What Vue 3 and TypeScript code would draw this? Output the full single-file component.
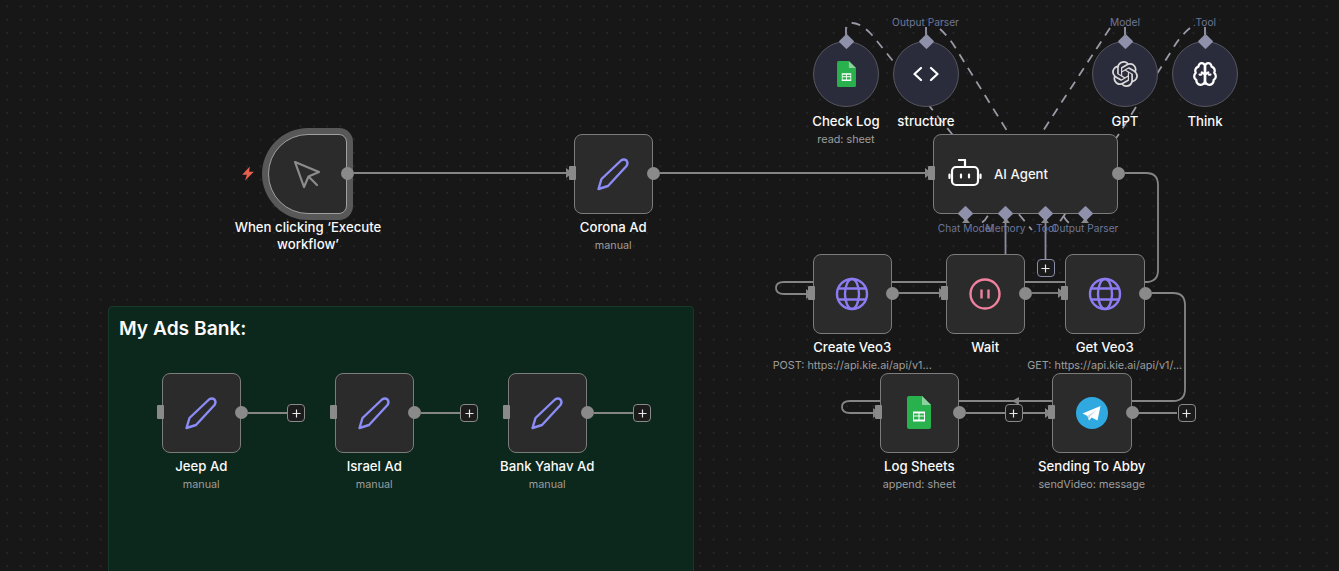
<script setup lang="ts">
interface FlowNode { name: string; sub?: string; x: number; y: number; icon: string }
interface Port { label: string; x: number }

const nodes: FlowNode[] = [
  { name: 'Corona Ad', sub: 'manual', x: 573.5, y: 134, icon: 'pen' },
  { name: 'Create Veo3', sub: 'POST: https://api.kie.ai/api/v1...', x: 812.5, y: 254, icon: 'globe' },
  { name: 'Wait', x: 945.5, y: 254, icon: 'pause' },
  { name: 'Get Veo3', sub: 'GET: https://api.kie.ai/api/v1/...', x: 1065, y: 254, icon: 'globe' },
  { name: 'Log Sheets', sub: 'append: sheet', x: 879.5, y: 373, icon: 'sheet' },
  { name: 'Sending To Abby', sub: 'sendVideo: message', x: 1052, y: 373, icon: 'telegram' },
  { name: 'Jeep Ad', sub: 'manual', x: 161.5, y: 373, icon: 'pen' },
  { name: 'Israel Ad', sub: 'manual', x: 334.5, y: 373, icon: 'pen' },
  { name: 'Bank Yahav Ad', sub: 'manual', x: 507.5, y: 373, icon: 'pen' },
]

const tools: FlowNode[] = [
  { name: 'Check Log', sub: 'read: sheet', x: 813, y: 41, icon: 'sheet' },
  { name: 'structure', x: 893, y: 41, icon: 'code' },
  { name: 'GPT', x: 1092, y: 41, icon: 'openai' },
  { name: 'Think', x: 1172, y: 41, icon: 'brain' },
]

const topPorts: Port[] = [
  { label: 'Output Parser', x: 925.5 },
  { label: 'Model', x: 1125 },
  { label: '.Tool', x: 1204.5 },
]
const bottomPorts: Port[] = [
  { label: 'Chat Model', x: 965.5 },
  { label: 'Memory', x: 1005.5 },
  { label: '.Tool', x: 1045 },
  { label: 'Output Parser', x: 1085 },
]
const diamonds = [846, 926, 1125, 1205]
const pluses = [
  { x: 296, y: 413, tint: false },
  { x: 469, y: 413, tint: false },
  { x: 642, y: 413, tint: false },
  { x: 1045.5, y: 268, tint: true },
  { x: 1013.5, y: 413, tint: false },
  { x: 1186.5, y: 413, tint: false },
]
const solid = [
  'M354 173H568',
  'M660 173H925',
  'M1125 173H1146Q1158 173 1158 185V270Q1158 282 1146 282H784Q776 282 776 288Q776 294 784 294H808',
  'M899 293H941',
  'M1032 293H1060',
  'M1152 293H1173Q1185 293 1185 305V389Q1185 401 1173 401H850Q842 401 842 407Q842 413 850 413H875',
  'M966 413H1047',
  'M1138 413H1177',
  'M248 413H287',
  'M421 413H460',
  'M594 413H633',
]
const portLines = ['M1005.5 220V254', 'M1045.5 220V259']
const dashed = [
  'M846 36V30Q847 22 853 23Q862 24 872 35L952 134L1032 230',
  'M940 29Q950 38 958 52L1009 134L1066 220L1072 226',
  'M1110 28L1041 134L985 220L978 226',
  'M1190 28Q1180 36 1172 50L1119 134L1061 220L1056 226',
]
const arrows = [
  [568, 173], [927, 173], [808, 294], [941, 293], [1060, 293], [875, 413], [1047, 413],
]
</script>

<template>
  <main class="canvas">
    <section class="group">
      <h2 class="group-title">My Ads Bank:</h2>
    </section>

    <svg class="edges" width="1339" height="571" viewBox="0 0 1339 571">
      <path v-for="d in solid" :key="d" :d="d" class="edge" />
      <path v-for="d in portLines" :key="d" :d="d" class="edge port-line" />
      <path v-for="d in dashed" :key="d" :d="d" class="edge dash" />
      <path v-for="a in arrows" :key="a.join()" :d="`M${a[0] - 2} ${a[1] - 5}L${a[0] + 5} ${a[1]}L${a[0] - 2} ${a[1] + 5}Z`" class="head" />
      <path d="M1012 401L1019 397V405Z" class="head" />
    </svg>

    <!-- Trigger -->
    <div class="bolt">
      <svg width="14" height="15" viewBox="0 0 24 24"><path d="M15 0L2 14h8L7 24L22 9h-8z" fill="#e8604f" /></svg>
    </div>
    <article class="node trigger">
      <svg width="30" height="30" viewBox="0 0 30 30" fill="none" stroke="#8c8c8c" stroke-width="2.200" stroke-linejoin="round" stroke-linecap="round">
        <path d="M3 3L27 13L16.500 17.500L12 28Z M17 18L25 26" />
      </svg>
      <span class="port-out" />
    </article>
    <div class="label trigger-label"><strong>When clicking ‘Execute workflow’</strong></div>

    <!-- Agent -->
    <article class="node agent">
      <svg width="34" height="30" viewBox="0 0 34 30" fill="none" stroke="#fff" stroke-width="2.200" stroke-linecap="round" stroke-linejoin="round">
        <path d="M11 1H17V8" />
        <rect x="4" y="8" width="26" height="18" rx="4" />
        <path d="M1.500 15.500V19M32.500 15.500V19" />
        <path d="M13 15.500V18.500M21 15.500V18.500" />
      </svg>
      <span class="agent-title">AI Agent</span>
      <span class="port-out" />
      <span class="port-in" />
    </article>

    <!-- Regular nodes -->
    <template v-for="n in nodes" :key="n.name">
      <article class="node" :style="{ left: n.x + 'px', top: n.y + 'px' }">
        <svg v-if="n.icon === 'pen'" width="34" height="34" viewBox="0 0 34 34" fill="none" stroke="#8b8cf6" stroke-width="2.400" stroke-linejoin="round">
          <path d="M2.500 32L5.500 22L25 3.500Q28 1.500 30.500 3.500Q32.500 6 30.500 9L12 29Z" />
        </svg>
        <svg v-else-if="n.icon === 'globe'" width="34" height="34" viewBox="0 0 34 34" fill="none" stroke="#8c7cf2" stroke-width="2.400">
          <circle cx="17" cy="17" r="15" />
          <ellipse cx="17" cy="17" rx="7" ry="15" />
          <path d="M3 11.500H31M3 22.500H31" />
        </svg>
        <svg v-else-if="n.icon === 'pause'" width="32" height="32" viewBox="0 0 32 32" fill="none" stroke="#f0829f" stroke-width="2.400">
          <circle cx="16" cy="16" r="14.500" />
          <path d="M12.500 11.500V20.500M19.500 11.500V20.500" />
        </svg>
        <svg v-else-if="n.icon === 'sheet'" width="24" height="33" viewBox="0 0 24 33">
          <path d="M2 0H15L24 9V31Q24 33 22 33H2Q0 33 0 31V2Q0 0 2 0Z" fill="#28b14c" />
          <path d="M15 0L24 9H15Z" fill="#8ed1a0" />
          <path d="M6 15.500H18V25.500H6Z M7 17.500V19.500H11.500V17.500Z M12.500 17.500V19.500H17V17.500Z M7 20.500V23.500H11.500V20.500Z M12.500 20.500V23.500H17V20.500Z" fill="#fff" fill-rule="evenodd" />
        </svg>
        <svg v-else-if="n.icon === 'telegram'" width="32" height="32" viewBox="0 0 32 32">
          <circle cx="16" cy="16" r="16" fill="#2fa9e0" />
          <path d="M6.500 16.500L24.500 9L21.500 23.500L15.700 20.500L13 23.500L11.500 19Z" fill="#fff" />
          <path d="M11.500 19L21 12.500L14 19.500L13 23.500Z" fill="#c4d8e8" />
        </svg>
        <span class="port-out" />
        <span class="port-in" />
      </article>
      <div class="label" :style="{ left: n.x - 50.25 + 'px', top: n.y + 84 + 'px' }">
        <strong>{{ n.name }}</strong>
        <small v-if="n.sub">{{ n.sub }}</small>
      </div>
    </template>

    <!-- AI sub-nodes -->
    <template v-for="t in tools" :key="t.name">
      <article class="tool" :style="{ left: t.x + 'px', top: t.y + 'px' }">
        <svg v-if="t.icon === 'sheet'" width="19" height="26" viewBox="0 0 24 33">
          <path d="M2 0H15L24 9V31Q24 33 22 33H2Q0 33 0 31V2Q0 0 2 0Z" fill="#28b14c" />
          <path d="M15 0L24 9H15Z" fill="#8ed1a0" />
          <path d="M6 15.500H18V25.500H6Z M7 17.500V19.500H11.500V17.500Z M12.500 17.500V19.500H17V17.500Z M7 20.500V23.500H11.500V20.500Z M12.500 20.500V23.500H17V20.500Z" fill="#fff" fill-rule="evenodd" />
        </svg>
        <svg v-else-if="t.icon === 'code'" width="26" height="16" viewBox="0 0 26 16" fill="none" stroke="#fff" stroke-width="2.200" stroke-linecap="round" stroke-linejoin="round">
          <path d="M8 2L1.500 8L8 14M18 2L24.500 8L18 14" />
        </svg>
        <svg v-else-if="t.icon === 'openai'" width="26" height="26" viewBox="0 0 24 24" fill="#d9d9d9">
          <path d="M22.2819 9.8211a5.9847 5.9847 0 0 0-.5157-4.9108 6.0462 6.0462 0 0 0-6.5098-2.9A6.0651 6.0651 0 0 0 4.9807 4.1818a5.9847 5.9847 0 0 0-3.9977 2.9 6.0462 6.0462 0 0 0 .7427 7.0966 5.98 5.98 0 0 0 .511 4.9107 6.051 6.051 0 0 0 6.5146 2.9001A5.9847 5.9847 0 0 0 13.2599 24a6.0557 6.0557 0 0 0 5.7718-4.2058 5.9894 5.9894 0 0 0 3.9977-2.9001 6.0557 6.0557 0 0 0-.7475-7.0729zm-9.022 12.6081a4.4755 4.4755 0 0 1-2.8764-1.0408l.1419-.0804 4.7783-2.7582a.7948.7948 0 0 0 .3927-.6813v-6.7369l2.02 1.1686a.071.071 0 0 1 .038.052v5.5826a4.504 4.504 0 0 1-4.4945 4.4944zm-9.6607-4.1254a4.4708 4.4708 0 0 1-.5346-3.0137l.142.0852 4.783 2.7582a.7712.7712 0 0 0 .7806 0l5.8428-3.3685v2.3324a.0804.0804 0 0 1-.0332.0615L9.74 19.9502a4.4992 4.4992 0 0 1-6.1408-1.6464zM2.3408 7.8956a4.485 4.485 0 0 1 2.3655-1.9728V11.6a.7664.7664 0 0 0 .3879.6765l5.8144 3.3543-2.0201 1.1685a.0757.0757 0 0 1-.071 0l-4.8303-2.7865A4.504 4.504 0 0 1 2.3408 7.872zm16.5963 3.8558L13.1038 8.364 15.1192 7.2a.0757.0757 0 0 1 .071 0l4.8303 2.7913a4.4944 4.4944 0 0 1-.6765 8.1042v-5.6772a.79.79 0 0 0-.407-.667zm2.0107-3.0231l-.142-.0852-4.7735-2.7818a.7759.7759 0 0 0-.7854 0L9.409 9.2297V6.8974a.0662.0662 0 0 1 .0284-.0615l4.8303-2.7866a4.4992 4.4992 0 0 1 6.6802 4.66zM8.3065 12.863l-2.02-1.1638a.0804.0804 0 0 1-.038-.0567V6.0742a4.4992 4.4992 0 0 1 7.3757-3.4537l-.142.0805L8.704 5.459a.7948.7948 0 0 0-.3927.6813zm1.0976-2.3654l2.602-1.4998 2.6069 1.4998v2.9994l-2.5974 1.4997-2.6067-1.4997Z" />
        </svg>
        <svg v-else width="26" height="26" viewBox="0 0 24 24" fill="none" stroke="#fff" stroke-width="2.100" stroke-linecap="round" stroke-linejoin="round">
          <path d="M12 5a3 3 0 1 0-5.997.125 4 4 0 0 0-2.526 5.77 4 4 0 0 0 .556 6.588A4 4 0 1 0 12 18Z" />
          <path d="M12 5a3 3 0 1 1 5.997.125 4 4 0 0 1 2.526 5.77 4 4 0 0 1-.556 6.588A4 4 0 1 1 12 18Z" />
          <path d="M12 5V21M12 12.500L9 10.500M12 12.500L15 10.500M7 12.500H8.500M15.500 12.500H17" />
        </svg>
      </article>
      <div class="label" :style="{ left: t.x - 57 + 'px', top: t.y + 71 + 'px' }">
        <strong>{{ t.name }}</strong>
        <small v-if="t.sub">{{ t.sub }}</small>
      </div>
    </template>

    <!-- Ports -->
    <span v-for="x in diamonds" :key="'d' + x" class="diamond" :style="{ left: x - 5.5 + 'px', top: '35.5px' }" />
    <span v-for="x in diamonds" :key="'s' + x" class="stub" :style="{ left: x - 1 + 'px' }" />
    <span v-for="p in bottomPorts" :key="'t' + p.x" class="tip" :style="{ left: p.x - 4 + 'px' }" />
    <span v-for="p in bottomPorts" :key="'b' + p.x" class="diamond" :style="{ left: p.x - 5.5 + 'px', top: '207.5px' }" />
    <span v-for="p in topPorts" :key="'tl' + p.x" class="port-label" :style="{ left: p.x + 'px', top: '16px' }">{{ p.label }}</span>
    <span v-for="p in bottomPorts" :key="'bl' + p.x" class="port-label" :style="{ left: p.x + 'px', top: '222px' }">{{ p.label }}</span>

    <button
      v-for="p in pluses"
      :key="`${p.x}-${p.y}`"
      class="plus"
      :class="{ tint: p.tint }"
      :style="{ left: p.x - 9 + 'px', top: p.y - 9 + 'px' }"
      aria-label="Add node"
    >
      <svg width="9" height="9" viewBox="0 0 10 10" stroke="#e8e8e8" stroke-width="1.300"><path d="M5 .5V9.500M.5 5H9.500" /></svg>
    </button>
  </main>
</template>

<style>
html, body { margin: 0; background: #171717; overflow: hidden; }
</style>

<style scoped>
.canvas {
  position: relative;
  width: 1339px;
  height: 571px;
  overflow: hidden;
  background-color: #171717;
  background-image: radial-gradient(circle at center, #2c2c2c 0.6px, transparent 0.9px);
  background-size: 13.33px 13.33px;
  background-position: 0.6px -0.3px;
  font-family: Inter, "Liberation Sans", sans-serif;
  color: #fff;
}
.group {
  position: absolute;
  left: 108px;
  top: 306px;
  width: 586px;
  height: 300px;
  box-sizing: border-box;
  background: #0c271b;
  border: 1px solid #163a29;
  border-radius: 4px;
  padding: 9px 10px;
}
.group-title {
  margin: 0;
  font-size: 19.2px;
  line-height: 24px;
  font-weight: 600;
  color: #fafafa;
}
.edges { position: absolute; left: 0; top: 0; }
.edge { fill: none; stroke: #858585; stroke-width: 1.800; }
.port-line { stroke: #8a8ca0; }
.dash { stroke: #9a9aa6; stroke-dasharray: 9 7; }
.head { fill: #858585; }
.node {
  position: absolute;
  width: 79.5px;
  height: 79.5px;
  box-sizing: border-box;
  display: flex;
  align-items: center;
  justify-content: center;
  background: #2b2b2b;
  border: 1.600px solid #7c7c7c;
  border-radius: 8px;
}
.trigger {
  left: 267.500px;
  top: 134px;
  border-radius: 40px 8px 8px 40px;
  box-shadow: 0 0 0 6px #585858;
  border-color: #a0a0a0;
}
.agent {
  left: 932.500px;
  top: 134px;
  width: 185.500px;
  justify-content: flex-start;
  padding-left: 14.500px;
  gap: 12px;
}
.agent-title { font-size: 13.2px; font-weight: 500; color: #f5f5f5; }
.port-out {
  position: absolute;
  right: -8px;
  top: 31.500px;
  width: 13px;
  height: 13px;
  border-radius: 50%;
  background: #8a8a8a;
}
.port-in {
  position: absolute;
  left: -5.500px;
  top: 31px;
  width: 7px;
  height: 14px;
  background: #8a8a8a;
  border-radius: 1px;
}
.tool {
  position: absolute;
  width: 66px;
  height: 66px;
  box-sizing: border-box;
  display: flex;
  align-items: center;
  justify-content: center;
  background: #2b2c3b;
  border: 1.500px solid #565660;
  border-radius: 50%;
}
.label {
  position: absolute;
  width: 180px;
  display: flex;
  flex-direction: column;
  align-items: center;
  text-align: center;
}
.label strong {
  font-size: 13.2px;
  line-height: 18px;
  font-weight: 500;
  color: #fafafa;
  white-space: nowrap;
}
.label small {
  margin-top: 3px;
  font-size: 10.800px;
  line-height: 14px;
  color: #9d9d9d;
  white-space: nowrap;
}
.trigger-label { left: 218px; top: 219px; }
.trigger-label strong { white-space: normal; line-height: 17px; width: 160px; }
.bolt { position: absolute; left: 241px; top: 166px; display: flex; }
.diamond {
  position: absolute;
  width: 11px;
  height: 11px;
  background: #8f90aa;
  transform: rotate(45deg);
  border-radius: 1px;
}
.stub { position: absolute; top: 27px; width: 2px; height: 9px; background: #8a8c9e; }
.tip {
  position: absolute;
  top: 218px;
  width: 0;
  height: 0;
  border-left: 4px solid transparent;
  border-right: 4px solid transparent;
  border-bottom: 5px solid #8a8a8a;
}
.port-label {
  position: absolute;
  transform: translateX(-50%);
  font-size: 10.200px;
  line-height: 13px;
  color: #6d7699;
  white-space: nowrap;
}
.plus {
  position: absolute;
  width: 18px;
  height: 18px;
  padding: 0;
  box-sizing: border-box;
  display: flex;
  align-items: center;
  justify-content: center;
  background: #1b1b1b;
  border: 1.500px solid #8a8a8a;
  border-radius: 4px;
}
.tint { border-color: #8a8ca8; }
</style>
